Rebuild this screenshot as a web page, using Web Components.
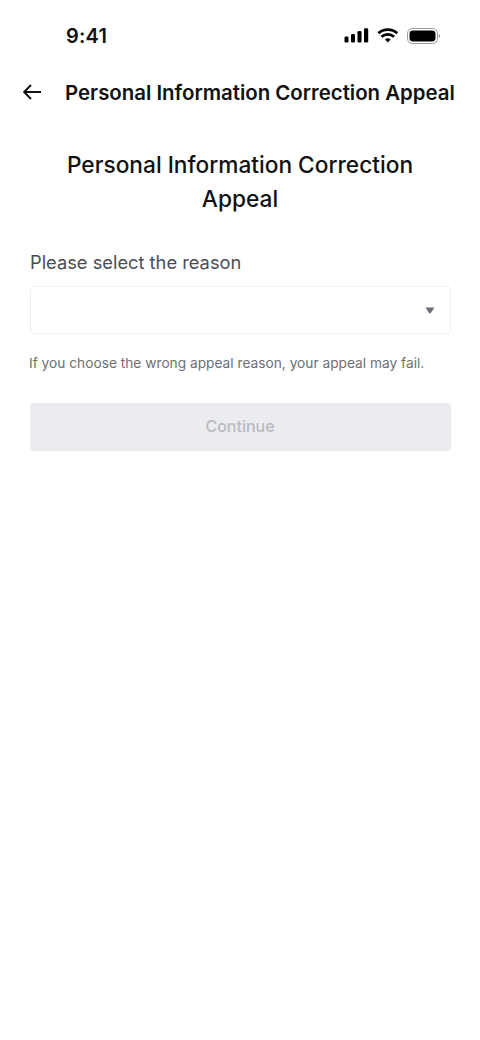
<!DOCTYPE html>
<html><head><meta charset="utf-8"><style>
html,body{margin:0;padding:0;background:#fff}
body{width:480px;height:1040px;overflow:hidden;font-family:Inter,"Liberation Sans",sans-serif;-webkit-font-smoothing:antialiased}
</style></head><body>
<appeal-page></appeal-page>
<template id="t-status"><style>
:host{display:flex;align-items:center;justify-content:space-between;height:72px;padding:0 40px 0 66px;box-sizing:border-box;color:#000}
.t{font-size:20px;font-weight:600;letter-spacing:.2px;color:#111}
.i{display:flex;align-items:center;gap:0}
svg{display:block}
</style><span class="t">9:41</span><div class="i">
<svg width="96" height="20" viewBox="0 0 96 20">
<rect x="0.500" y="10.500" width="4" height="6" rx="1.2" fill="#000"/><rect x="7" y="8" width="4" height="8.500" rx="1.2" fill="#000"/><rect x="13.500" y="5" width="4" height="11.500" rx="1.2" fill="#000"/><rect x="20" y="2.300" width="4.200" height="14.200" rx="1.2" fill="#000"/>
<path d="M34.400 7.300a14 14 0 0 1 18.800 0M37.500 10.800a9.500 9.500 0 0 1 12.600 0" fill="none" stroke="#000" stroke-width="2.800"/><path d="M41 13.500a4.300 4.300 0 0 1 5.600 0L43.800 16.500z" fill="#000"/>
<rect x="63.500" y="2.500" width="30" height="15" rx="5" fill="none" stroke="#9a9a9a" stroke-width="1"/><rect x="65.500" y="4.500" width="26" height="11" rx="3.400" fill="#000"/><path d="M94.800 8v4a2 2 0 0 0 1.200-2 2 2 0 0 0-1.200-2z" fill="#9a9a9a"/>
</svg></div></template>
<template id="t-nav"><style>
:host{display:flex;align-items:center;height:40px;box-sizing:border-box;padding-left:23px;color:#111}
svg{display:block;flex:none;margin-right:24px}
.t{font-size:20.400px;font-weight:600;white-space:nowrap}
</style><svg width="18" height="16" viewBox="0 0 18 16"><path d="M18 8H1.200M8 1 1.200 8 8 15" fill="none" stroke="#111" stroke-width="1.900"/></svg><span class="t"><slot></slot></span></template>
<template id="t-select"><style>
:host{display:flex;align-items:center;justify-content:flex-end;height:48px;box-sizing:border-box;border:1px solid #eeeff1;border-radius:4px;padding-right:15px;background:#fff}
svg{display:block}
</style><svg width="10" height="7" viewBox="0 0 10 7"><path d="M0.500 0.500h9L5.500 6.500h-1z" fill="#6d7078"/></svg></template>
<template id="t-button"><style>
:host{display:flex;align-items:center;justify-content:center;height:48px;box-sizing:border-box;padding-bottom:2px;background:#ebecef;border-radius:4px;color:#b9bbc0;font-size:16px;font-weight:500}
</style><slot></slot></template>
<template id="t-page"><style>
:host{display:block}
main{padding:0 29.500px;display:flex;flex-direction:column}
h1{margin:36px 0 0;font-size:22.700px;font-weight:500;line-height:34px;text-align:center;color:#111;padding:0 8px}
.label{margin:34px 0 0 .5px;font-size:18.300px;line-height:24px;color:#4c4d52;font-weight:400}
app-select{margin-top:12px}
.hint{margin:19px 0 0 -.5px;font-size:13.730px;line-height:20px;color:#6d6f75;white-space:nowrap}
app-button{margin-top:30px}
</style>
<status-bar></status-bar>
<nav-bar>Personal Information Correction Appeal</nav-bar>
<main>
<h1>Personal Information Correction Appeal</h1>
<div class="label">Please select the reason</div>
<app-select></app-select>
<p class="hint">If you choose the wrong appeal reason, your appeal may fail.</p>
<app-button>Continue</app-button>
</main></template>
<script>
for(const [n,id] of [['status-bar','t-status'],['nav-bar','t-nav'],['app-select','t-select'],['app-button','t-button'],['appeal-page','t-page']]){
customElements.define(n,class extends HTMLElement{constructor(){super();this.attachShadow({mode:'open'}).appendChild(document.getElementById(id).content.cloneNode(true))}});
}
</script>
</body></html>
